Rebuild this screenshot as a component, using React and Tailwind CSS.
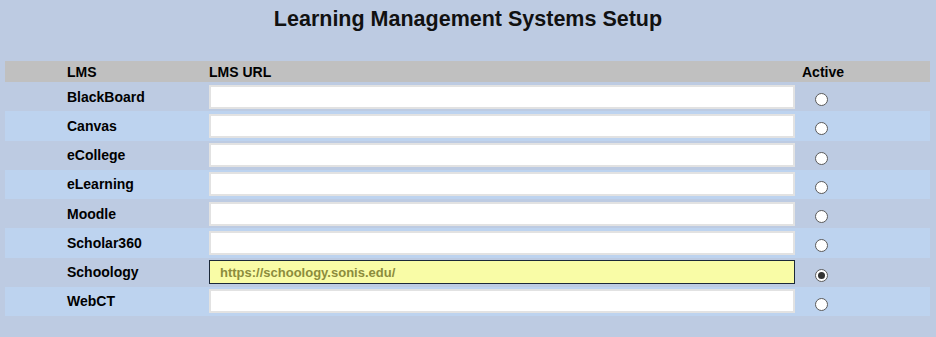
import React from 'react';

const systems = [
  { name: 'BlackBoard', url: '', active: false },
  { name: 'Canvas', url: '', active: false },
  { name: 'eCollege', url: '', active: false },
  { name: 'eLearning', url: '', active: false },
  { name: 'Moodle', url: '', active: false },
  { name: 'Scholar360', url: '', active: false },
  { name: 'Schoology', url: 'https://schoology.sonis.edu/', active: true },
  { name: 'WebCT', url: '', active: false },
];

function Radio({ checked }) {
  return (
    <span className="flex h-[13px] w-[13px] items-center justify-center rounded-full border border-[#5a5a5a] bg-white">
      {checked && <span className="h-[7px] w-[7px] rounded-full bg-[#333]"></span>}
    </span>
  );
}

export default function App() {
  return (
    <div
      className="min-h-screen w-[936px] h-[337px] bg-[#bdcbe2] text-black"
      style={{ fontFamily: '"Liberation Sans", Arial, sans-serif' }}
    >
      <h1 className="pt-[7px] text-center text-[21.5px] font-bold leading-[25px] text-[#111]">
        Learning Management Systems Setup
      </h1>

      <div className="mx-[5px] mt-[29px] w-[925px]">
        {/* en-tête */}
        <div className="flex h-[21px] items-center bg-[#c0c0c0] pt-[1px] text-[14px] font-bold">
          <div className="w-[204px] pl-[62px]">LMS</div>
          <div className="w-[593px]">LMS URL</div>
          <div>Active</div>
        </div>

        {systems.map((s, i) => (
          <div
            key={s.name}
            className={
              'flex h-[29.25px] items-center text-[14px] font-bold ' +
              (i % 2 === 1 ? 'bg-[#bdd3ef]' : 'bg-[#bdcbe2]')
            }
          >
            <div className="w-[204px] pl-[62px] pt-[1px]">{s.name}</div>
            <div className="w-[593px]">
              {s.active ? (
                <input
                  readOnly
                  value={s.url}
                  className="block h-[24px] w-[586px] border border-[#1b2838] bg-[#f9fca6] pl-[10px] text-[13px] font-bold text-[#8c8c3c] outline-none"
                />
              ) : (
                <input
                  readOnly
                  value={s.url}
                  className="block h-[24px] w-[586px] border-2 border-[#e2e2e2] bg-white pl-[10px] text-[13px] outline-none"
                />
              )}
            </div>
            <div className="pl-[13px] pt-[6px]">
              <Radio checked={s.active} />
            </div>
          </div>
        ))}
      </div>
    </div>
  );
}
